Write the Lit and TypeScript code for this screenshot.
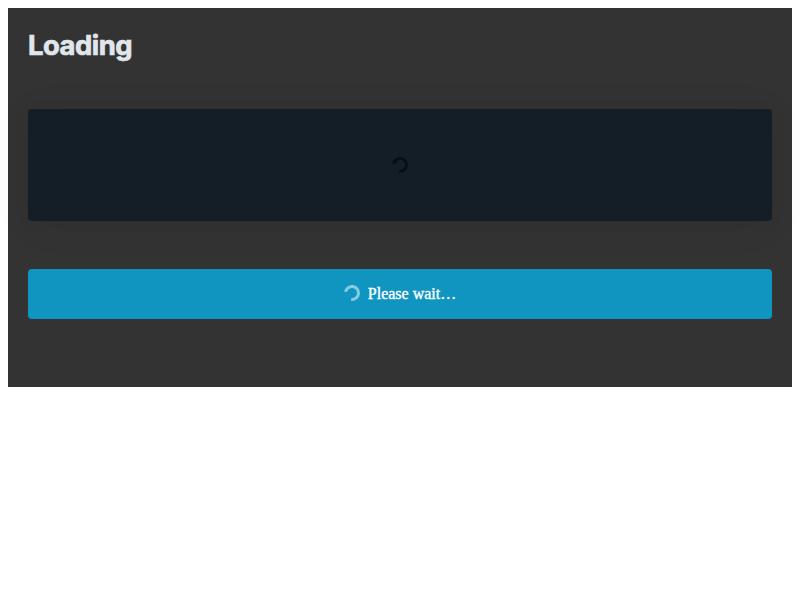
import { LitElement, html, css, svg } from "lit";
import { customElement } from "lit/decorators.js";

@customElement("app-root")
export class AppRoot extends LitElement {
  static styles = css`
    :host { display: block; padding: 8px; background: #fff; }
    .page { box-sizing: border-box; height: 379px; padding: 20px; background: #333; }
    h2 { margin: 0 0 47px; font: 700 27.4px/34px Inter, sans-serif; letter-spacing: -0.5px; color: #e1e6eb; -webkit-text-stroke: 0.7px #e1e6eb; height: 34px; }
    .card { display: flex; align-items: center; justify-content: center; height: 112px; border-radius: 4px; background: #141e26; color: #000; margin-bottom: 48px;
      box-shadow: 0 2px 16px rgba(0, 0, 0, 0.05), 0 4px 40px rgba(0, 0, 0, 0.06); }
    .button { position: relative; display: flex; align-items: center; justify-content: center; gap: 8px; width: 100%; height: 50px; padding: 0; border: 0; border-radius: 4px; background: #1095c1; color: #fff; font: 16px/24px "Liberation Serif", serif; -webkit-text-stroke: 0.35px #fff; }
    .spinner { width: 16px; height: 16px; fill: none; stroke: currentColor; stroke-width: 3; opacity: 0.5; }
    .button .spinner { margin-bottom: 2px; }
  `;

  private spinner() {
    return html`<svg class="spinner" viewBox="0 0 16 16">${svg`<path d="M1.6 6.8A6.5 6.5 0 1 1 7.2 14.45" />`}</svg>`;
  }

  render() {
    return html`<main class="page">
      <h2>Loading</h2>
      <article class="card" aria-busy="true">${this.spinner()}</article>
      <button class="button" aria-busy="true">${this.spinner()}<span>Please wait…</span></button>
    </main>`;
  }
}
